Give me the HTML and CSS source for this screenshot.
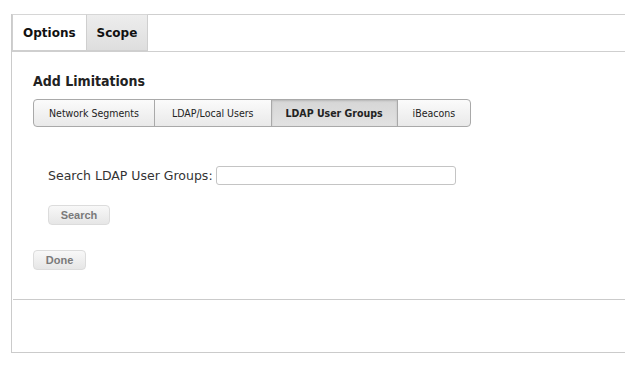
FILE: index.html
```html
<!DOCTYPE html>
<html>
<head>
<meta charset="utf-8">
<link rel="stylesheet" href="styles.css">
</head>
<body>
<div class="panel">
  <div class="tabs">
    <div class="tab active">Options</div>
    <div class="tab">Scope</div>
  </div>
  <div class="content">
    <h2 class="title">Add Limitations</h2>
    <div class="seg">
      <div class="seg-item">Network Segments</div>
      <div class="seg-item wide">LDAP/Local Users</div>
      <div class="seg-item selected">LDAP User Groups</div>
      <div class="seg-item">iBeacons</div>
    </div>
    <div class="search-area">
      <div class="search-row">
        <label class="search-label" for="q">Search LDAP User Groups:</label>
        <input id="q" class="search-input" type="text">
      </div>
      <button class="btn btn-search">Search</button>
    </div>
    <button class="btn btn-done">Done</button>
  </div>
  <div class="footer"></div>
</div>
</body>
</html>
```
FILE: styles.css
```css
html, body {
  margin: 0;
  padding: 0;
  background: #fff;
}
body {
  font-family: "DejaVu Sans", "Lucida Grande", sans-serif;
  color: #222;
  padding: 14px 0 0 11px;
}
.panel {
  border-left: 1px solid #cbcbcb;
  border-bottom: 1px solid #cbcbcb;
  height: 338px;
  display: flex;
  flex-direction: column;
}
.tabs {
  display: flex;
  border-top: 1px solid #cfcfcf;
  border-bottom: 1px solid #cfcfcf;
  height: 36px;
}
.tab {
  box-sizing: border-box;
  border: 1px solid #cfcfcf;
  border-top-color: #d6d6d6;
  margin-left: -1px;
  margin-top: -1px;
  height: 37px;
  padding: 0 10px;
  font-size: 12px;
  font-weight: bold;
  color: #111;
  display: flex;
  align-items: center;
  background: linear-gradient(#ededed, #dedede);
}
.tab:first-child {
  margin-left: 0;
}
.tab.active {
  background: #fff;
}
.content {
  padding: 20px 0 0 21px;
  flex: 1;
}
.title {
  margin: 0;
  font-family: "DejaVu Sans Condensed", "DejaVu Sans", sans-serif;
  font-size: 14px;
  line-height: 18px;
  font-weight: bold;
  color: #222;
}
.seg {
  display: inline-flex;
  margin-top: 9px;
  height: 28px;
  box-sizing: border-box;
  border: 1px solid #a9a9a9;
  border-radius: 4px;
  overflow: hidden;
  background: linear-gradient(#fbfbfb, #e9e9e9);
}
.seg-item {
  display: flex;
  align-items: center;
  justify-content: center;
  padding: 0 15px;
  font-family: "DejaVu Sans Condensed", "DejaVu Sans", sans-serif;
  font-size: 10.5px;
  color: #222;
  border-left: 1px solid #a9a9a9;
}
.seg-item:first-child {
  border-left: none;
}
.seg-item.wide {
  padding: 0 17px;
}
.seg-item.selected {
  font-weight: bold;
  padding: 0 14px;
  background: linear-gradient(#d6d6d6, #e2e2e2);
  box-shadow: inset 0 1px 2px rgba(0,0,0,0.15);
}
.search-area {
  padding: 39px 0 0 15px;
}
.search-row {
  display: flex;
  align-items: center;
  gap: 3px;
}
.search-label {
  font-size: 12.5px;
  color: #333;
}
.search-input {
  box-sizing: border-box;
  width: 240px;
  height: 19px;
  border: 1px solid #c4c4c4;
  border-radius: 3px;
  margin: 0;
  padding: 0 4px;
  background: #fff;
}
.btn {
  display: block;
  box-sizing: border-box;
  height: 20px;
  border: 1px solid #dcdcdc;
  border-radius: 4px;
  background: linear-gradient(#f8f8f8, #e6e6e6);
  font-family: "Liberation Sans", Arial, sans-serif;
  font-weight: bold;
  font-size: 11px;
  color: #7a7a7a;
  padding: 0;
}
.btn-search {
  width: 62px;
  margin-top: 20px;
}
.btn-done {
  width: 53px;
  margin-top: 25px;
}
.footer {
  height: 52px;
  margin-left: 1px;
  border-top: 1px solid #cbcbcb;
}
```
